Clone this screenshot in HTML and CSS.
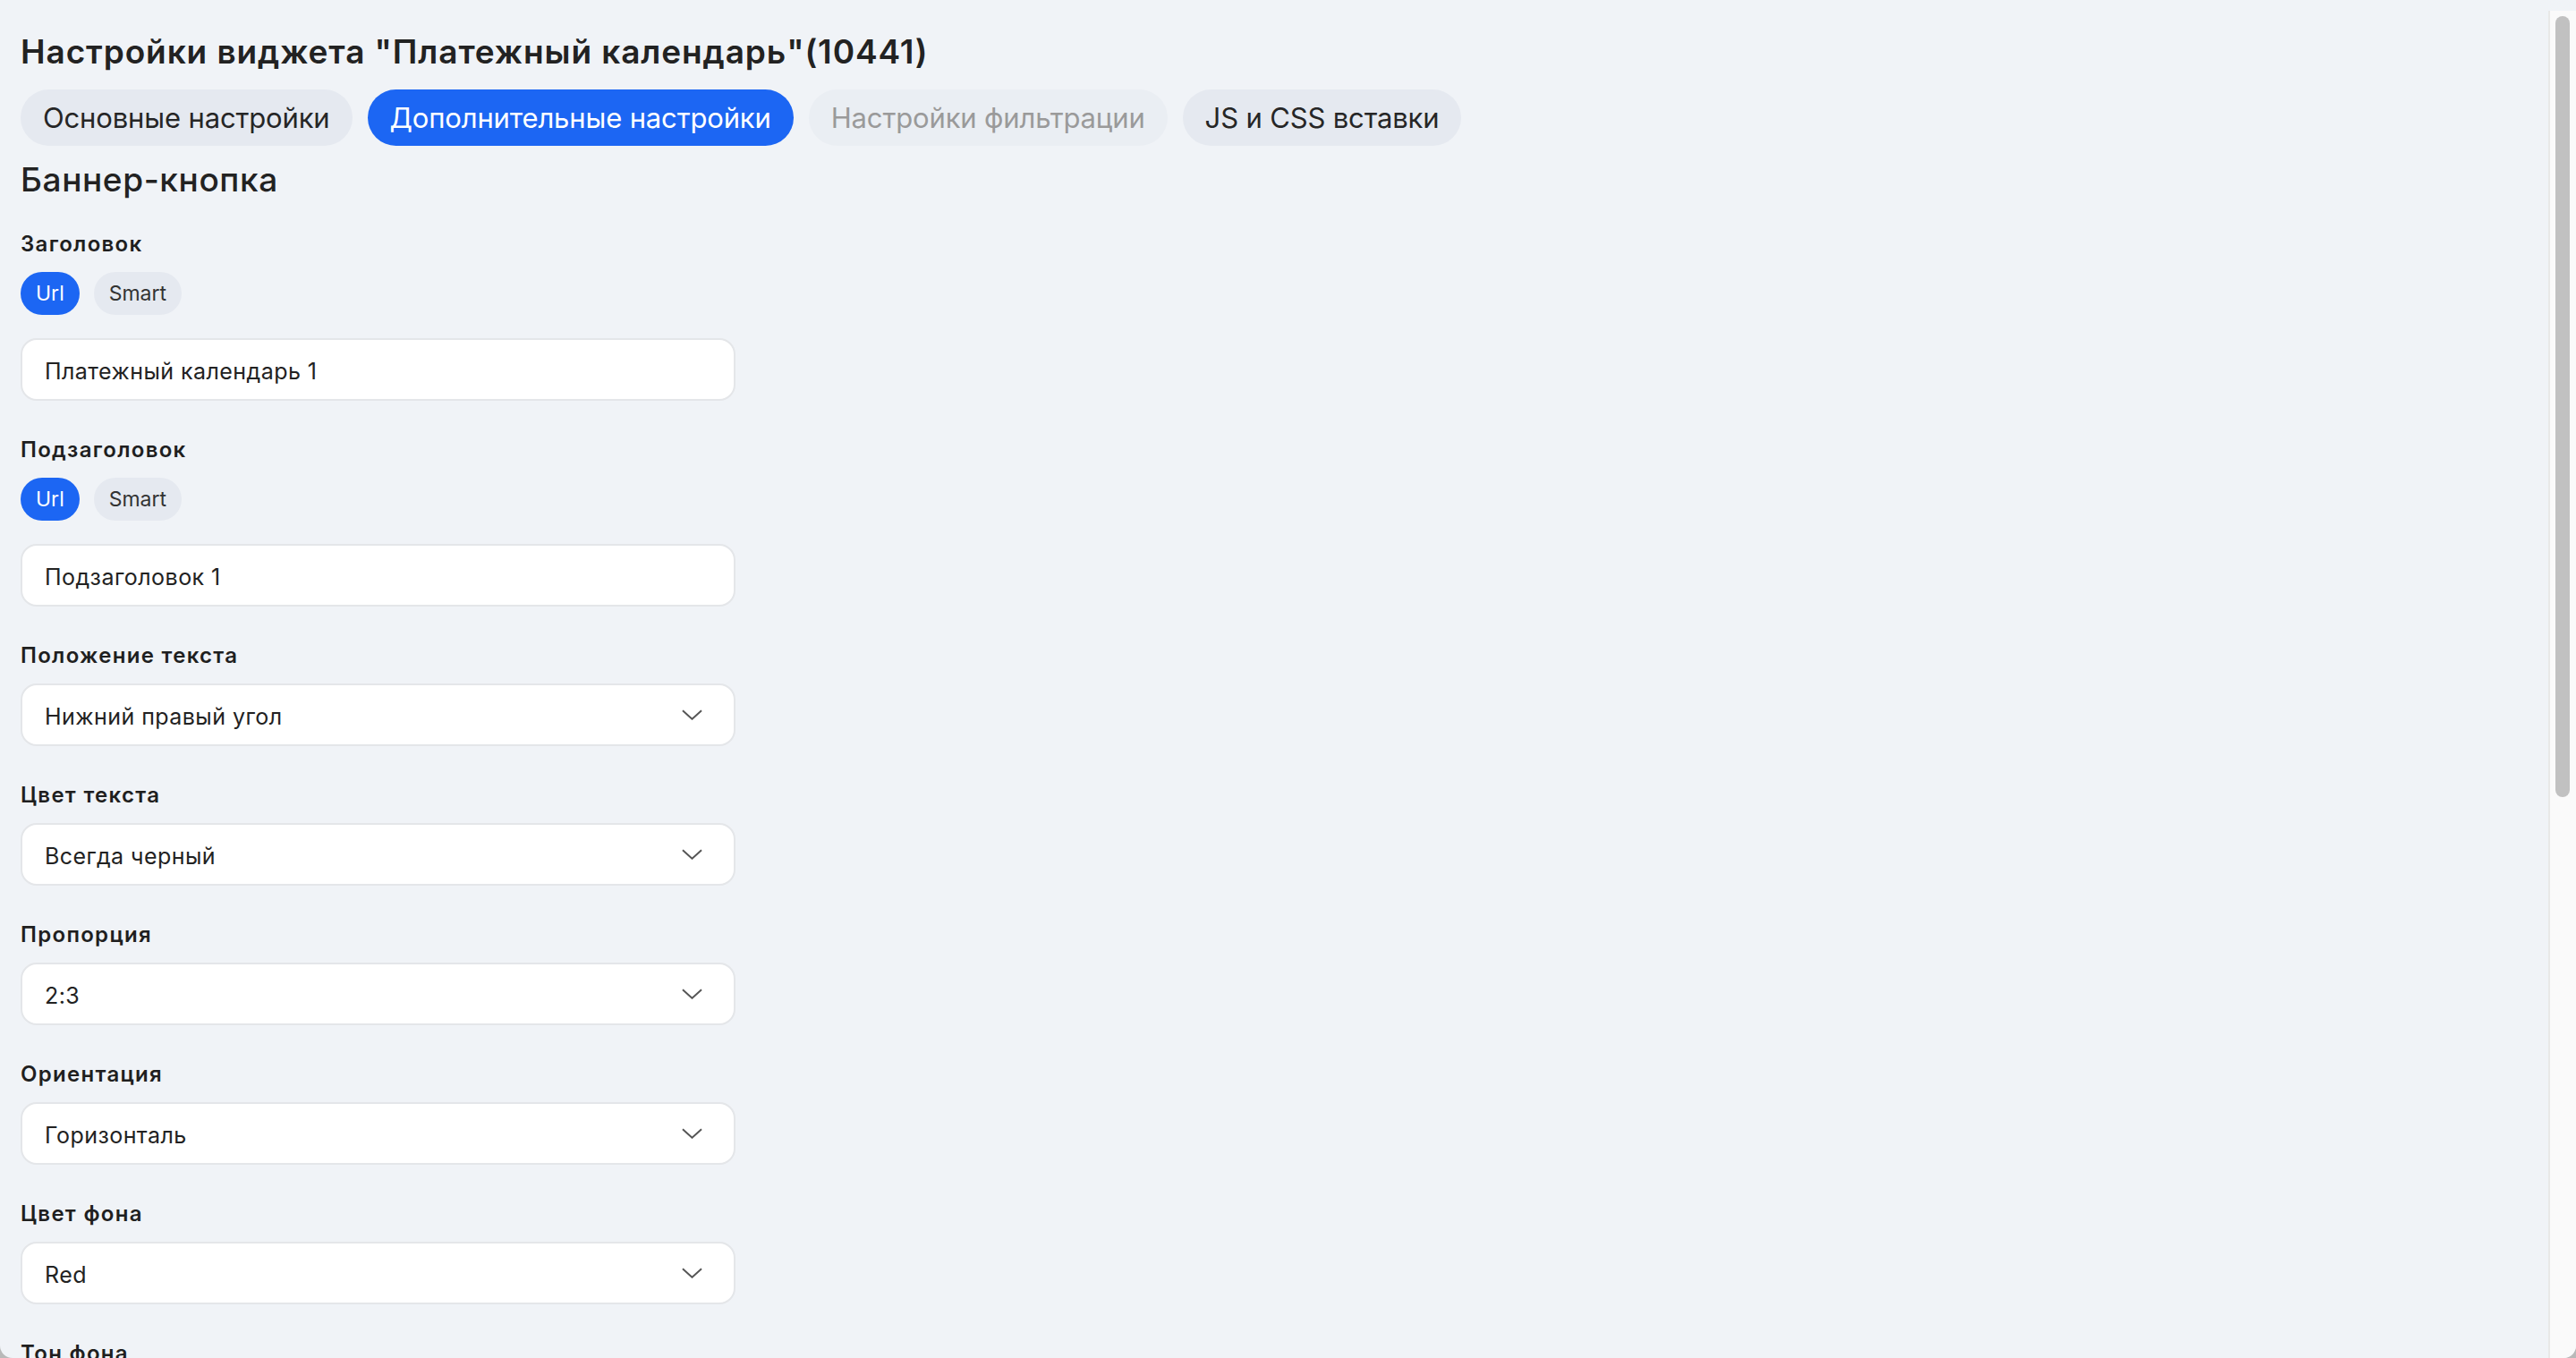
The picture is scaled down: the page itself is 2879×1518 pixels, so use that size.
FILE: index.html
```html
<!DOCTYPE html>
<html lang="ru">
<head>
    <meta charset="UTF-8">
    <meta name="viewport" content="width=device-width, initial-scale=1.0">
    <title>Настройки виджета</title>
    <link rel="stylesheet" href="styles.css">
</head>
<body>
    <div class="window">
        <div class="page">
            <h1 class="title">Настройки виджета "Платежный календарь"(10441)</h1>

            <div class="tabs">
                <button class="tab">Основные настройки</button>
                <button class="tab active">Дополнительные настройки</button>
                <button class="tab disabled">Настройки фильтрации</button>
                <button class="tab">JS и CSS вставки</button>
            </div>

            <h2 class="section-title">Баннер-кнопка</h2>

            <div class="fields">
                <div class="field">
                    <div class="label">Заголовок</div>
                    <div class="switch">
                        <button class="pill active">Url</button>
                        <button class="pill">Smart</button>
                    </div>
                    <input class="input input-spaced" type="text" value="Платежный календарь 1">
                </div>

                <div class="field">
                    <div class="label">Подзаголовок</div>
                    <div class="switch">
                        <button class="pill active">Url</button>
                        <button class="pill">Smart</button>
                    </div>
                    <input class="input input-spaced" type="text" value="Подзаголовок 1">
                </div>

                <div class="field">
                    <div class="label">Положение текста</div>
                    <div class="select">
                        <span>Нижний правый угол</span>
                        <svg class="chevron" viewBox="0 0 24 12"><path d="M1 1 L12 11 L23 1"/></svg>
                    </div>
                </div>

                <div class="field">
                    <div class="label">Цвет текста</div>
                    <div class="select">
                        <span>Всегда черный</span>
                        <svg class="chevron" viewBox="0 0 24 12"><path d="M1 1 L12 11 L23 1"/></svg>
                    </div>
                </div>

                <div class="field">
                    <div class="label">Пропорция</div>
                    <div class="select">
                        <span>2:3</span>
                        <svg class="chevron" viewBox="0 0 24 12"><path d="M1 1 L12 11 L23 1"/></svg>
                    </div>
                </div>

                <div class="field">
                    <div class="label">Ориентация</div>
                    <div class="select">
                        <span>Горизонталь</span>
                        <svg class="chevron" viewBox="0 0 24 12"><path d="M1 1 L12 11 L23 1"/></svg>
                    </div>
                </div>

                <div class="field">
                    <div class="label">Цвет фона</div>
                    <div class="select">
                        <span>Red</span>
                        <svg class="chevron" viewBox="0 0 24 12"><path d="M1 1 L12 11 L23 1"/></svg>
                    </div>
                </div>

                <div class="field">
                    <div class="label">Тон фона</div>
                    <div class="select">
                        <span>Обычный</span>
                        <svg class="chevron" viewBox="0 0 24 12"><path d="M1 1 L12 11 L23 1"/></svg>
                    </div>
                </div>
            </div>
        </div>

        <div class="scrollbar">
            <div class="scrollbar-thumb"></div>
        </div>
    </div>
</body>
</html>
```

FILE: styles.css
```css
html {
    background-color: #b9b9b9;
}

body {
    margin: 0;
    font-family: 'Inter', 'Noto Sans', sans-serif;
    color: #1f1f1f;
    overflow: hidden;
}

.window {
    height: 100vh;
    background-color: #f0f3f7;
    border-radius: 0 0 14px 14px;
    overflow: hidden;
}

.page {
    padding: 36px 23px 0;
}

.title {
    margin: 0;
    font-size: 37px;
    line-height: 44px;
    font-weight: 600;
    letter-spacing: 0.9px;
    color: #222222;
}

.tabs {
    display: flex;
    gap: 17px;
    margin-top: 20px;
}

.tab {
    height: 63px;
    padding: 0 25px;
    border: none;
    border-radius: 32px;
    background-color: #e5e9f0;
    color: #262626;
    font-family: inherit;
    font-size: 31px;
    font-weight: 400;
    letter-spacing: -0.15px;
    cursor: pointer;
}

.tab.active {
    background-color: #1c66f3;
    color: #ffffff;
}

.tab.disabled {
    background-color: #eaeef3;
    color: #9a9a9a;
    cursor: default;
}

.section-title {
    margin: 16px 0 0;
    font-size: 37px;
    line-height: 44px;
    font-weight: 500;
    letter-spacing: 0.6px;
    color: #222222;
}

.fields {
    display: flex;
    flex-direction: column;
    gap: 39px;
    margin-top: 34px;
}

.field {
    display: flex;
    flex-direction: column;
    gap: 15px;
    width: 799px;
}

.label {
    font-size: 24px;
    line-height: 32px;
    font-weight: 600;
    letter-spacing: 1.3px;
}

.switch {
    display: flex;
    gap: 16px;
}

.pill {
    height: 48px;
    padding: 0 17px;
    border: none;
    border-radius: 24px;
    background-color: #e5e9f0;
    color: #333333;
    font-family: inherit;
    font-size: 23px;
    cursor: pointer;
}

.pill.active {
    background-color: #1c66f3;
    color: #ffffff;
}

.input,
.select {
    box-sizing: border-box;
    width: 100%;
    height: 70px;
    padding: 3px 25px 0;
    border: 2px solid #e4e6e9;
    border-radius: 18px;
    background-color: #ffffff;
    color: #222222;
    font-family: inherit;
    font-size: 25px;
    letter-spacing: 0.45px;
}

.input {
    outline: none;
}

.input-spaced {
    margin-top: 11px;
}

.select {
    display: flex;
    align-items: center;
    justify-content: space-between;
    padding-right: 35px;
}

.chevron {
    width: 23px;
    height: 12px;
    margin-top: -3px;
    fill: none;
    stroke: #555555;
    stroke-width: 2;
}

.scrollbar {
    position: fixed;
    top: 12px;
    right: 0;
    bottom: 0;
    width: 29px;
    background-color: #fafafa;
    border-left: 2px solid #e8e8e8;
    border-bottom-right-radius: 14px;
}

.scrollbar-thumb {
    width: 16px;
    height: 873px;
    margin: 6px 0 0 6px;
    border-radius: 8px;
    background-color: #c1c1c1;
}
```
